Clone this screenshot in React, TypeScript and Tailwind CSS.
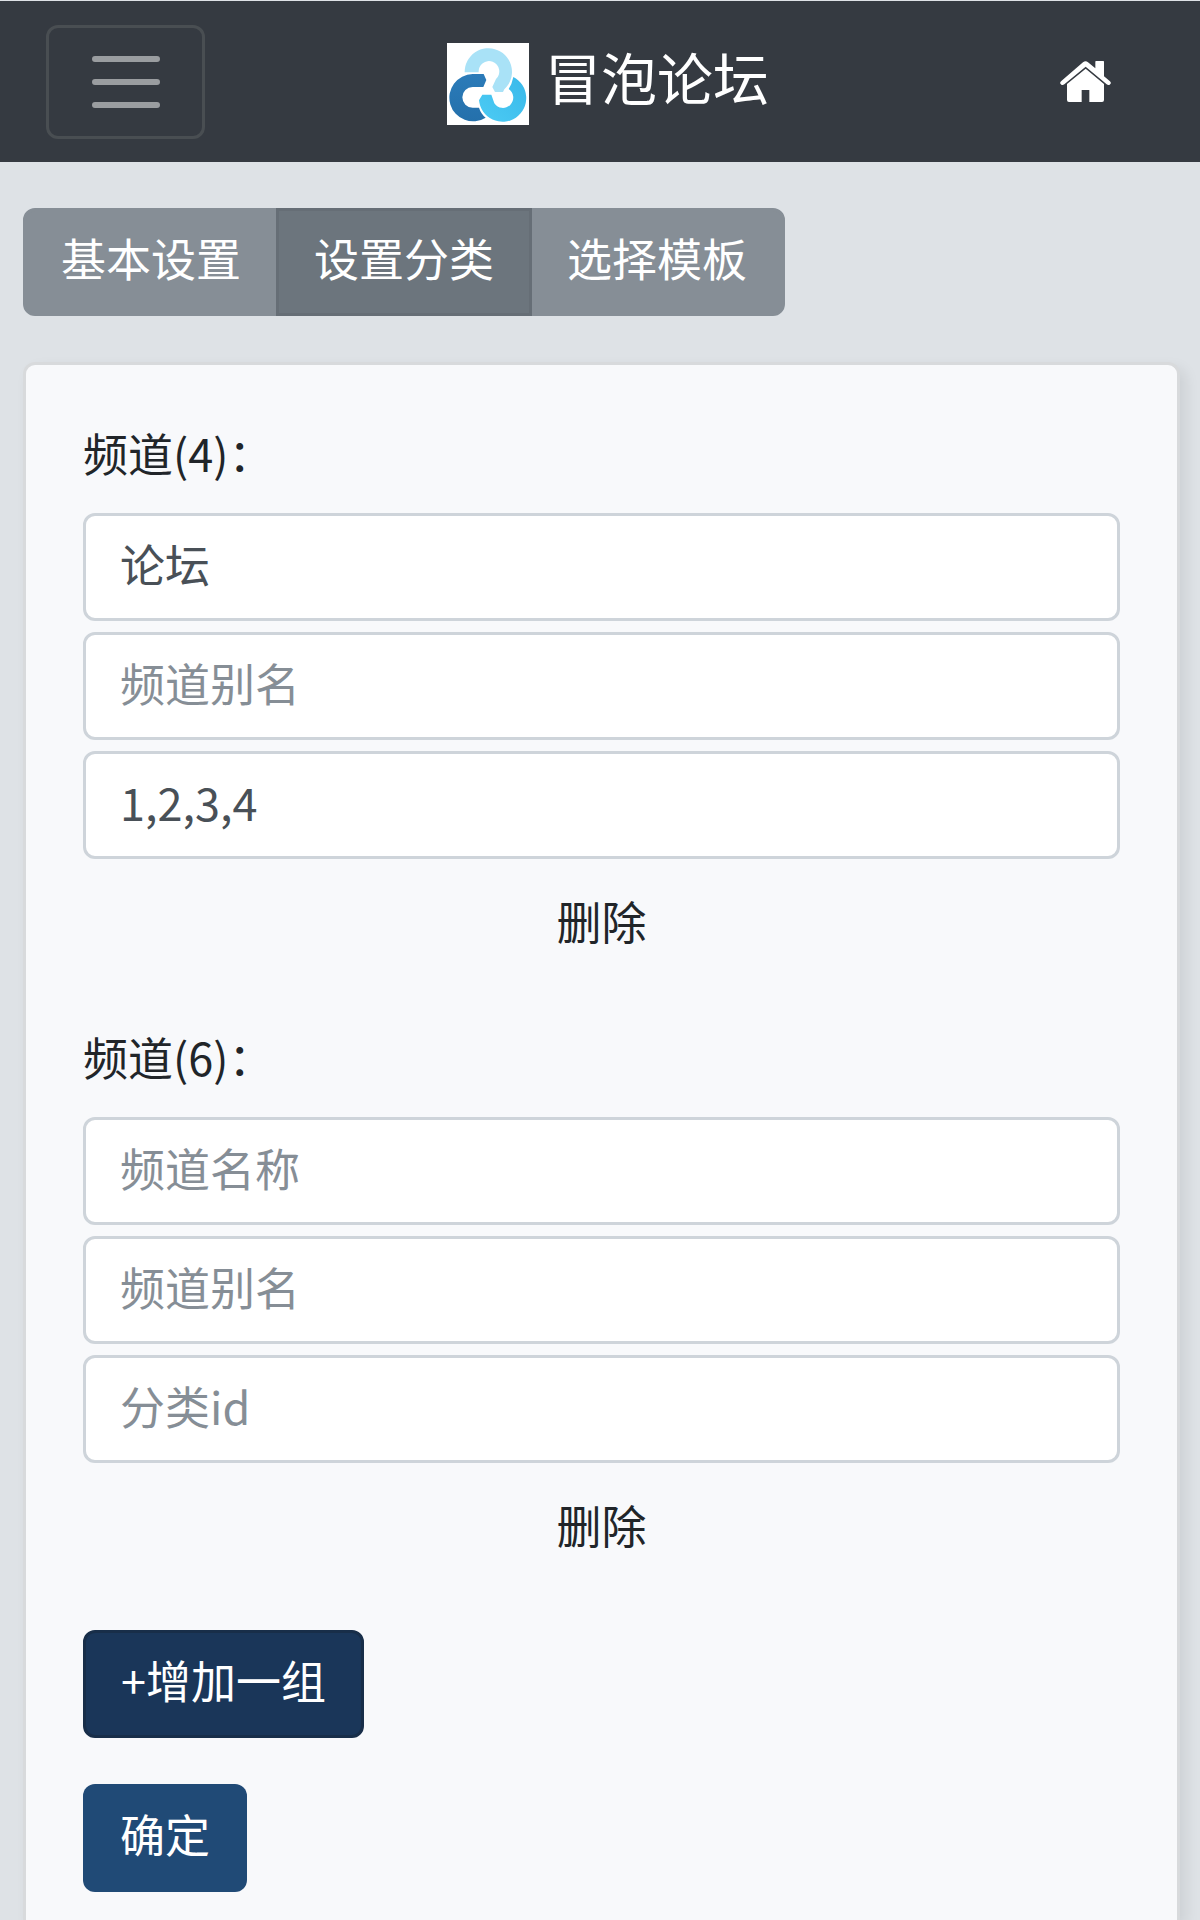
function Logo() {
  return (
    <svg viewBox="0 0 246 246" className="size-[82px] shrink-0 bg-white" aria-hidden="true">
      <defs>
        <linearGradient id="deep" x1="0" y1="0" x2="0" y2="1">
          <stop offset="0" stopColor="#2b7bb9" />
          <stop offset="1" stopColor="#2470ab" />
        </linearGradient>
        <linearGradient id="sky" x1="1" y1="0" x2="0" y2="1">
          <stop offset="0" stopColor="#39b9ea" />
          <stop offset="1" stopColor="#4ccbf4" />
        </linearGradient>
      </defs>
      <g transform="translate(-21 -24)">
        <path
          d="M74 112A71 71 0 1 1 193 163L189 171H165L157 156L168 132A31 31 0 1 0 116 112Z"
          fill="#a9e2f7"
        />
        <path
          d="M98 117H131L139 135L130 156H98A31 31 0 0 0 98 218H117Q123 237 137 248A71 71 0 1 1 98 117Z"
          fill="url(#deep)"
        />
        <path
          d="M220 126A71 71 0 1 1 117 196L127 179H154L163 205A31 31 0 1 0 206 162Q216 147 220 126Z"
          fill="url(#sky)"
        />
      </g>
    </svg>
  );
}

function HomeIcon() {
  return (
    <svg viewBox="0 0 153 123" className="h-[41px] w-[51px]" fill="currentColor" aria-hidden="true">
      <path d="M106 2Q106 0 108 0H130Q132 0 132 2V46L149 60Q155 65 151 69L149 71Q145 74 140 70L77 17L13 70Q8 74 4 71L2 69Q-2 65 4 60L69 4Q77 -3 84 4L106 22Z" />
      <path d="M77 23L132 69V117Q132 123 126 123H88V87H65V123H27Q21 123 21 117V69Z" />
    </svg>
  );
}

const tabs = [
  { label: "基本设置", shape: "rounded-l-xl border-[#868e96] bg-[#868e96]" },
  { label: "设置分类", shape: "z-10 border-[#666e76] bg-[#6c757d]" },
  { label: "选择模板", shape: "rounded-r-xl border-[#868e96] bg-[#868e96]" },
];

const channels = [
  { id: 4, name: "论坛", alias: "", categories: "1,2,3,4" },
  { id: 6, name: "", alias: "", categories: "" },
];

function Field({ label, value }: { label: string; value: string }) {
  return (
    <input
      type="text"
      aria-label={label}
      placeholder={label}
      defaultValue={value}
      className="h-[108px] w-full rounded-xl border-3 border-[#ced4da] bg-white px-[34px] pb-2 text-[45px] text-[#495057] placeholder:text-[#868e96] placeholder:opacity-100"
    />
  );
}

export default function App() {
  return (
    <div className="flex min-h-screen flex-col bg-[#dee2e6] font-['Noto_Sans_CJK_SC',sans-serif] text-[45px] leading-[68px] text-[#212529]">
      <header className="flex h-[162px] items-center justify-between border-t border-[#dee2e6] bg-[#353a41] pr-10 pl-[46px]">
        <button
          type="button"
          aria-label="菜单"
          className="flex h-[114px] w-[159px] items-center justify-center rounded-xl border-3 border-[#494e52]"
        >
          <svg viewBox="0 0 68 52" className="h-[52px] w-[68px]" stroke="#9a9da0" strokeWidth="6" strokeLinecap="round">
            <path d="M3 3H65M3 26H65M3 49H65" />
          </svg>
        </button>
        <a href="#" className="flex items-center gap-4 pt-1 text-[56px] leading-[82px] text-white">
          <Logo />
          <span className="pb-4">冒泡论坛</span>
        </a>
        <a href="#" aria-label="首页" className="flex w-[149px] justify-center text-white">
          <HomeIcon />
        </a>
      </header>

      <nav className="mt-[46px] flex px-[23px]">
        {tabs.map((tab) => (
          <button
            key={tab.label}
            type="button"
            className={`-ml-[3px] h-[108px] border-3 px-[35px] pb-2 text-white first:ml-0 ${tab.shape}`}
          >
            {tab.label}
          </button>
        ))}
      </nav>

      <main className="mt-[46px] ml-[23px] mr-5 flex-1 rounded-t-xl border-3 border-b-0 border-[#d8dadc] bg-[#f8f9fb] px-[57px] pt-[57px] pb-7 shadow-[6px_6px_14px_rgba(0,0,0,0.08)]">
        <form className="flex flex-col items-start">
          {channels.map((channel) => (
            <fieldset key={channel.id} className="mb-12 flex w-full flex-col items-center gap-[11px]">
              <legend className="mb-[29px] leading-[62px]">频道({channel.id})：</legend>
              <Field label="频道名称" value={channel.name} />
              <Field label="频道别名" value={channel.alias} />
              <Field label="分类id" value={channel.categories} />
              <button type="button" className="h-[108px] px-[37px] pb-1.5">
                删除
              </button>
            </fieldset>
          ))}
          <button
            type="button"
            className="mb-[46px] h-[108px] rounded-xl border-3 border-[#182e49] bg-[#1a3659] px-[35px] pb-2 text-white"
          >
            +增加一组
          </button>
          <button type="submit" className="h-[108px] rounded-xl bg-[#204a76] px-[37px] pb-2 text-white">
            确定
          </button>
        </form>
      </main>
    </div>
  );
}
